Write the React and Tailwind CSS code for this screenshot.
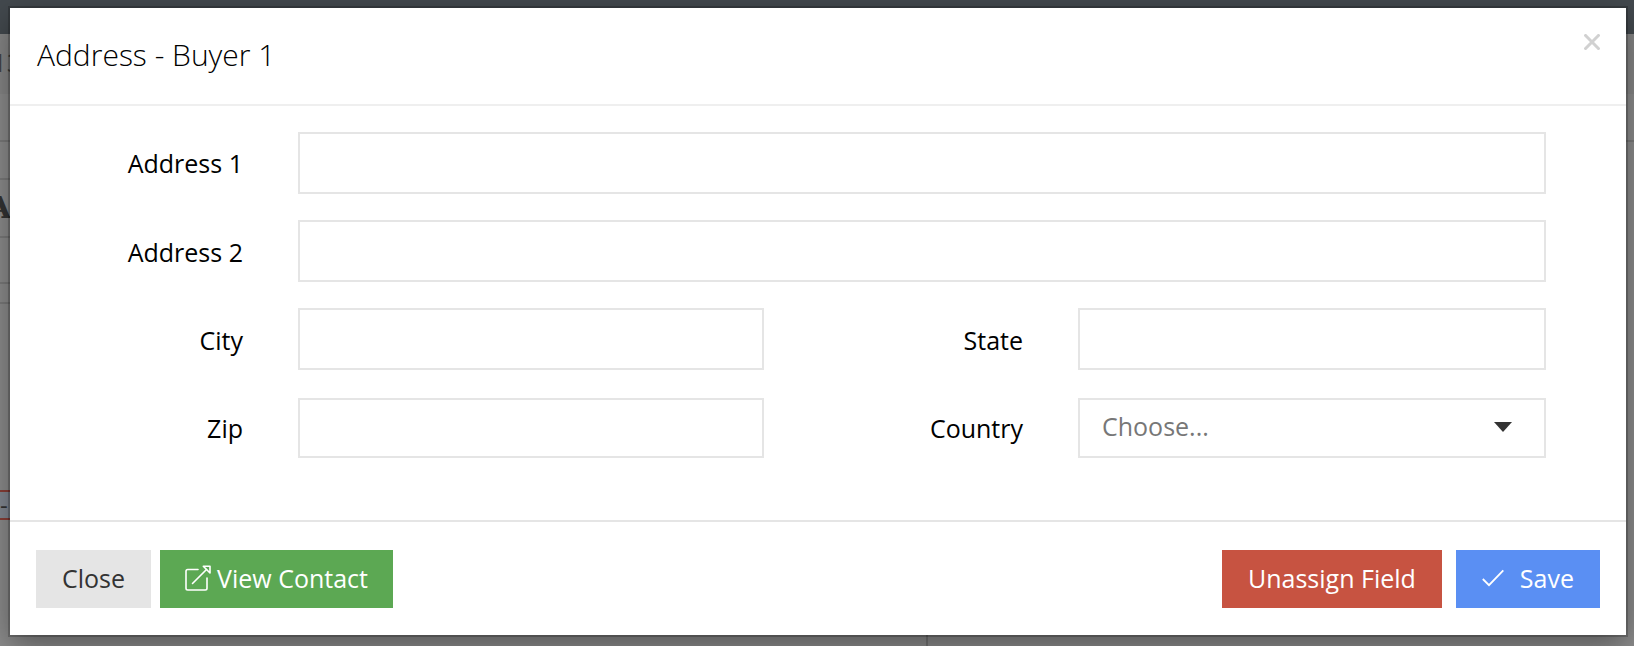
import React from 'react';

const inputClass = "w-full border-2 border-[#e5e5e5] bg-white px-[22px] text-[25px] outline-none";
const labelClass = "text-right text-[25px] leading-[34px] text-black";
const buttonClass = "flex items-center h-[58px] pb-[2px] text-[25px] leading-[34px]";

const ExternalIcon = () => (
    <svg width="26" height="26" viewBox="0 0 26 26" fill="none" stroke="currentColor" strokeWidth="1.6" aria-hidden="true">
        <path d="M13 4.5H2.7Q1 4.5 1 6.2V23.3Q1 25 2.7 25H20.3Q22 25 22 23.3V13" strokeLinecap="round" />
        <path d="M7.5 18.5L21.5 4.5" strokeLinecap="round" />
        <path d="M18.3 1.2H25V8L18.3 1.2Z" strokeLinejoin="round" />
    </svg>
);

const CheckIcon = () => (
    <svg width="22" height="18" viewBox="0 0 22 18" fill="none" stroke="currentColor" strokeWidth="1.8" aria-hidden="true">
        <path d="M0.8 10L7 16.2L21.3 1.3" />
    </svg>
);

const Background = () => (
    <div className="min-h-screen flex flex-col bg-[#8c8c8c] text-[#333] overflow-hidden" aria-hidden="true">
        <div className="h-[34px] bg-[#43494e]"></div>
        <div className="h-[60px] -ml-[8px] bg-[#868686] pt-[11px] text-[26px] leading-[34px] text-[#444]">13</div>
        <div className="h-[48px] border-b-2 border-[#7a7a7a]"></div>
        <div className="w-1/2 h-[38px] border-b-2 border-[#7a7a7a]"></div>
        <div className="w-1/2 h-[58px] -ml-[12px] border-b-2 border-[#7a7a7a] pt-[8px] text-[30px] leading-[40px] font-bold font-['DejaVu_Serif',serif]">A</div>
        <div className="w-1/2 h-[46px] border-b-2 border-[#7a7a7a]"></div>
        <div className="w-1/2 h-[20px] border-b-2 border-[#7a7a7a]"></div>
        <div className="h-[186px]"></div>
        <div className="w-1/2 h-[30px] border-y-2 border-[#8a3f38] bg-[#838993] text-[24px] leading-[26px]">-</div>
        <div className="flex grow">
            <div className="w-[928px] border-r-2 border-[#737373]"></div>
        </div>
    </div>
);

const App = () => {
    return (
        <div className="relative font-['Open_Sans',sans-serif]">
            <Background />
            <div className="absolute inset-0 pt-[8px] pl-[10px] pr-[8px]">
                <div role="dialog" aria-labelledby="title" className="bg-white shadow-[0_0_0_2px_rgba(0,0,0,0.2),0_10px_30px_rgba(0,0,0,0.4)]">
                    <div className="flex items-start justify-between h-[98px] pl-[27px] pr-[26px] border-b-2 border-[#efefef]">
                        <h2 id="title" className="pt-[26px] text-[30px] leading-[42px] font-light text-black">Address - Buyer 1</h2>
                        <button type="button" aria-label="Close dialog" className="mt-[26px] text-[#d1d1d1]">
                            <svg width="16" height="16" viewBox="0 0 16 16" stroke="currentColor" strokeWidth="3" aria-hidden="true">
                                <path d="M0.5 0.5L15.5 15.5M15.5 0.5L0.5 15.5" />
                            </svg>
                        </button>
                    </div>

                    <form className="grid grid-cols-[233px_466fr_204px_468fr] gap-x-[55px] items-center pt-[26px] pb-[62px] pr-[80px]">
                        <label htmlFor="address1" className={labelClass}>Address 1</label>
                        <input id="address1" type="text" className={`col-span-3 h-[62px] ${inputClass}`} />

                        <label htmlFor="address2" className={`mt-[28px] ${labelClass}`}>Address 2</label>
                        <input id="address2" type="text" className={`col-span-3 h-[62px] mt-[26px] ${inputClass}`} />

                        <label htmlFor="city" className={`mt-[28px] ${labelClass}`}>City</label>
                        <input id="city" type="text" className={`h-[62px] mt-[26px] ${inputClass}`} />
                        <label htmlFor="state" className={`mt-[28px] ${labelClass}`}>State</label>
                        <input id="state" type="text" className={`h-[62px] mt-[26px] ${inputClass}`} />

                        <label htmlFor="zip" className={`mt-[28px] ${labelClass}`}>Zip</label>
                        <input id="zip" type="text" className={`h-[60px] mt-[28px] ${inputClass}`} />
                        <label htmlFor="country" className={`mt-[28px] ${labelClass}`}>Country</label>
                        <div className="relative mt-[28px]">
                            <select id="country" className={`block appearance-none h-[60px] pb-[2px] text-[#777] ${inputClass}`}>
                                <option>Choose...</option>
                            </select>
                            <svg className="absolute right-[34px] top-[24px] pointer-events-none" width="18" height="10" viewBox="0 0 18 10" fill="#333" aria-hidden="true">
                                <path d="M0 0H18L9 10Z" />
                            </svg>
                        </div>
                    </form>

                    <div className="flex items-center px-[26px] pt-[28px] pb-[27px] border-t-2 border-[#e5e5e5]">
                        <button type="button" className={`${buttonClass} px-[26px] bg-[#e5e5e5] text-[#333]`}>Close</button>
                        <button type="button" className={`${buttonClass} ml-[9px] px-[25px] gap-[6px] bg-[#5ca853] text-white`}>
                            <ExternalIcon />
                            View Contact
                        </button>
                        <button type="button" className={`${buttonClass} ml-auto px-[26px] bg-[#c75341] text-white`}>Unassign Field</button>
                        <button type="button" className={`${buttonClass} ml-[14px] px-[26px] gap-[16px] bg-[#5a8ff3] text-white`}>
                            <CheckIcon />
                            Save
                        </button>
                    </div>
                </div>
            </div>
        </div>
    );
};

export default App;
